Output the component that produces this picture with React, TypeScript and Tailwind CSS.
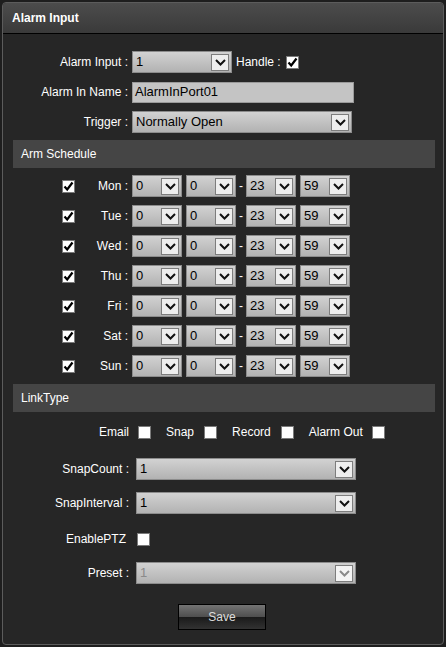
import React from "react";

const font = { fontFamily: '"Liberation Sans", Arial, sans-serif' };

function Chevron({ disabled }: { disabled?: boolean }) {
  return (
    <svg width="11" height="7" viewBox="0 0 11 7">
      <polyline
        points="1,1 5.5,5.5 10,1"
        fill="none"
        stroke={disabled ? "#8a8a8a" : "#111"}
        strokeWidth="2"
      />
    </svg>
  );
}

function Select({
  value,
  width,
  disabled,
}: {
  value: string;
  width: string;
  disabled?: boolean;
}) {
  return (
    <div
      className={`${width} flex h-[22px] items-center justify-between border border-[#8c8c8c] bg-gradient-to-b from-[#d2d2d2] to-[#b2b2b2] pl-[3px] pr-[2px] text-[13px]`}
    >
      <span className={disabled ? "text-[#8a8a8a]" : "text-black"}>{value}</span>
      <div
        className={`flex h-[17px] w-[18px] items-center justify-center border border-[#7d7d7d] ${
          disabled ? "bg-[#f4f4f4]" : "bg-[#eeeeee]"
        }`}
      >
        <Chevron disabled={disabled} />
      </div>
    </div>
  );
}

function Check({ checked }: { checked?: boolean }) {
  return (
    <div className="flex h-[13px] w-[13px] shrink-0 items-center justify-center border border-[#7a7a7a] bg-white">
      {checked && (
        <svg width="11" height="11" viewBox="0 0 11 11">
          <polyline
            points="1.5,5.5 4.2,8.5 9.5,1.5"
            fill="none"
            stroke="#000"
            strokeWidth="2.2"
          />
        </svg>
      )}
    </div>
  );
}

function SectionHeader({ title }: { title: string }) {
  return (
    <div className="ml-[10px] mr-[8px] flex h-[28px] items-center bg-[#454545] pl-[8px] text-[12px] text-white">
      {title}
    </div>
  );
}

const days = ["Mon", "Tue", "Wed", "Thu", "Fri", "Sat", "Sun"];

export default function App() {
  return (
    <div
      className="h-[647px] w-[446px] bg-[#1e1e1e] pl-[2px] pr-[2px] pt-[2px] pb-[2px] text-[12px] text-white"
      style={font}
    >
      <div className="flex h-[643px] w-[442px] flex-col overflow-hidden rounded-[4px] border border-[#5c5c5c] bg-[#262626]">
        <div className="flex h-[31px] shrink-0 items-center border-b border-black bg-gradient-to-b from-[#4c4c4c] to-[#3a3a3a] pl-[9px] text-[12px] font-bold text-white">
          Alarm Input
        </div>

        <div className="mt-[17px] flex h-[22px] items-center">
          <div className="w-[126px] pr-[1px] text-right">Alarm Input :</div>
          <div className="ml-[3px]">
            <Select value="1" width="w-[100px]" />
          </div>
          <span className="ml-[4px]">Handle :</span>
          <div className="ml-[5px]">
            <Check checked />
          </div>
        </div>

        <div className="mt-[8px] flex h-[22px] items-center">
          <div className="w-[126px] pr-[1px] text-right">Alarm In Name :</div>
          <div className="ml-[3px] flex h-[21px] w-[222px] items-center border border-[#9a9a9a] bg-[#c4c4c4] pl-[2px] text-[13px] text-black">
            AlarmInPort01
          </div>
        </div>

        <div className="mt-[8px] flex h-[22px] items-center">
          <div className="w-[126px] pr-[1px] text-right">Trigger :</div>
          <div className="ml-[3px]">
            <Select value="Normally Open" width="w-[220px]" />
          </div>
        </div>

        <div className="mt-[7px]">
          <SectionHeader title="Arm Schedule" />
        </div>

        <div className="mt-[7px] flex flex-col gap-[8px]">
          {days.map((d) => (
            <div key={d} className="flex h-[22px] items-center">
              <div className="ml-[59px]">
                <Check checked />
              </div>
              <div className="w-[54px] pr-[1px] text-right">{d} :</div>
              <div className="ml-[3px] flex items-center">
                <Select value="0" width="w-[50px]" />
                <div className="ml-[4px]">
                  <Select value="0" width="w-[50px]" />
                </div>
                <span className="w-[10px] text-center">-</span>
                <Select value="23" width="w-[50px]" />
                <div className="ml-[4px]">
                  <Select value="59" width="w-[50px]" />
                </div>
              </div>
            </div>
          ))}
        </div>

        <div className="mt-[7px]">
          <SectionHeader title="LinkType" />
        </div>

        <div className="mt-[9px] flex h-[22px] items-center">
          <span className="ml-[96px]">Email</span>
          <div className="ml-[9px]">
            <Check />
          </div>
          <span className="ml-[15px]">Snap</span>
          <div className="ml-[10px]">
            <Check />
          </div>
          <span className="ml-[15px]">Record</span>
          <div className="ml-[10px]">
            <Check />
          </div>
          <span className="ml-[15px]">Alarm Out</span>
          <div className="ml-[9px]">
            <Check />
          </div>
        </div>

        <div className="mt-[15px] flex h-[22px] items-center">
          <div className="w-[126px] text-right">SnapCount :</div>
          <div className="ml-[7px]">
            <Select value="1" width="w-[220px]" />
          </div>
        </div>

        <div className="mt-[12px] flex h-[22px] items-center">
          <div className="w-[126px] text-right">SnapInterval :</div>
          <div className="ml-[7px]">
            <Select value="1" width="w-[220px]" />
          </div>
        </div>

        <div className="mt-[14px] flex h-[22px] items-center">
          <div className="w-[123px] text-right">EnablePTZ</div>
          <div className="ml-[11px]">
            <Check />
          </div>
        </div>

        <div className="mt-[12px] flex h-[22px] items-center">
          <div className="w-[126px] text-right">Preset :</div>
          <div className="ml-[7px]">
            <Select value="1" width="w-[220px]" disabled />
          </div>
        </div>

        <div className="mt-[20px] flex justify-center pr-[2px]">
          <div className="flex h-[26px] w-[88px] flex-col overflow-hidden border border-black">
            <div className="relative flex h-full w-full items-center justify-center text-[12px] text-[#dcdcdc]">
              <div className="absolute inset-x-0 top-0 h-1/2 bg-gradient-to-b from-[#747474] to-[#4e4e4e]" />
              <div className="absolute inset-x-0 bottom-0 h-1/2 bg-gradient-to-b from-[#1a1a1a] to-[#323232]" />
              <span className="relative">Save</span>
            </div>
          </div>
        </div>
      </div>
    </div>
  );
}
